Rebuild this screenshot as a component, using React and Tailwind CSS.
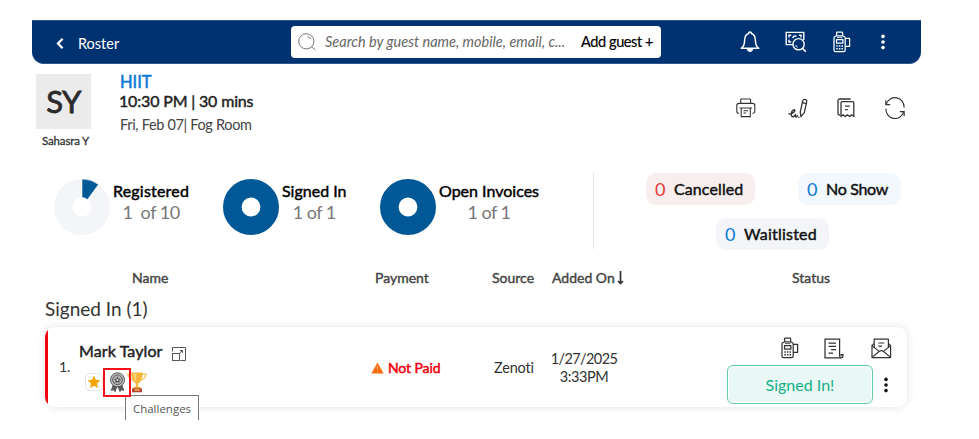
import React from "react";

const Dots = ({ className }) => (
  <svg className={className} width="6" height="18" viewBox="0 0 6 18" fill="currentColor">
    <circle cx="3" cy="3.4" r="1.8" />
    <circle cx="3" cy="9" r="1.8" />
    <circle cx="3" cy="14.6" r="1.8" />
  </svg>
);

const Terminal = ({ className }) => (
  <svg className={className} width="18" height="22" viewBox="0 0 18 22" fill="none" stroke="currentColor" strokeWidth="1.25" strokeLinejoin="round">
    <path d="M3.6 4.8V1.8Q3.6 1 4.4 1H8.8Q9.6 1 9.6 1.8V4.8" />
    <path d="M3.6 4.8L1.7 5.8Q1 6.2 1 7V19Q1 20.6 2.6 20.6H10.6Q12.2 20.6 12.2 19V7Q12.2 6.2 11.5 5.8L9.6 4.8Z" />
    <path d="M12.2 7.4H16.6V15.4H12.2" />
    <rect x="3.5" y="8.6" width="6.4" height="3.4" />
    <path d="M4 6.6H9.4" strokeWidth="0.8" />
    <path d="M3.3 14.9H10M3.3 17.7H10" strokeWidth="1.5" strokeDasharray="1.5 1.1" />
  </svg>
);

const Bell = () => (
  <svg width="20" height="22" viewBox="0 0 20 22" fill="none" stroke="currentColor" strokeWidth="1.5" strokeLinejoin="round">
    <path d="M8.6 2.6Q8.6 1 10 1Q11.4 1 11.4 2.6Q15.2 3.6 15.4 9.4Q15.5 15.2 18.8 17.3H1.2Q4.5 15.2 4.6 9.4Q4.8 3.6 8.6 2.6Z" />
    <path d="M7 18H13Q12.4 20.8 10 20.8Q7.6 20.8 7 18Z" fill="currentColor" strokeWidth="0.6" />
  </svg>
);

const CashSearch = () => (
  <svg width="22" height="22" viewBox="0 0 22 22" fill="none" stroke="currentColor" strokeWidth="1.4">
    <path d="M8 13.6H1.2V1.4H18.8V9" />
    <path d="M4 6.4V4.2H6.2M13.8 4.2H16V6.4M4 8.8V11H6.2" />
    <path d="M7.6 7Q8.6 4.6 11.4 5.2" />
    <circle cx="13.6" cy="13.2" r="5.6" />
    <path d="M10.8 14Q11 15.6 12.6 16.2" strokeWidth="1" />
    <path d="M17.4 17.2L20.8 20.8" strokeWidth="1.6" />
  </svg>
);

const Printer = () => (
  <svg width="20" height="20" viewBox="0 0 20 20" fill="none" stroke="currentColor" strokeWidth="1.1">
    <path d="M4.7 5.2V1.6Q4.7 1 5.3 1H14Q14.6 1 14.6 1.6V5.2" />
    <path d="M3.2 15.2H2.4Q.8 15.2 .8 13.6V7.5Q.8 5.4 2.9 5.4H16.6Q18.8 5.4 18.8 7.5V13.6Q18.8 15.2 17.2 15.2H16.4" />
    <path d="M3.6 10H16M5.2 10V18.6H14.3V10" />
    <path d="M7.5 12.7H12M7.5 15H10.2" />
  </svg>
);

const Sign = () => (
  <svg width="21" height="21" viewBox="0 0 21 21" fill="none" stroke="currentColor" strokeWidth="1.4" strokeLinecap="round" strokeLinejoin="round">
    <path d="M1 16C4.4 15.8 7.2 13.8 6.8 12.2C6.3 10.9 3.6 12.4 3.3 15.4C3.1 17.8 4 19 5.3 18.7C6.5 18.4 7 17.4 7.6 16.5C7.4 18.2 7.6 19.2 8.4 19C9 18.8 9.2 18.2 9.5 17.7" />
    <path d="M12.3 13.8L14.7 3Q15.3 1 17 1.4Q19 1.9 18.7 3.9L16.3 14.6L12.9 18.6Z" strokeWidth="1.3" />
    <path d="M14.4 4.6L18.3 5.6M10.4 19.2H11.2" strokeWidth="1.1" />
  </svg>
);

const Receipts = () => (
  <svg width="18" height="20" viewBox="0 0 18 20" fill="none" stroke="currentColor" strokeWidth="1.3" strokeLinejoin="round">
    <path d="M3.2 17H2.6Q1 17 1 15.4V2.6Q1 1 2.6 1H13.6" />
    <path d="M4 18.5V4.8Q4 3.6 5.2 3.6H15.6Q16.8 3.6 16.8 4.8V18.5L14.7 16.8L12.6 18.5L10.4 16.8L8.2 18.5L6.1 16.8Z" />
    <path d="M8 8.2H12.8M8 11.6H10.8" />
  </svg>
);

const Refresh = () => (
  <svg width="22" height="22" viewBox="0 0 22 22" fill="none" stroke="currentColor" strokeWidth="1.15">
    <path d="M2.4 7.2A9 9 0 0 1 20 10.6" />
    <path d="M2 11.6A9 9 0 0 0 19.6 15" />
    <path d="M1.8 3.2V7.6H6.2" />
    <path d="M20.2 19V14.6H15.8" />
  </svg>
);

const Bill = () => (
  <svg width="20" height="21" viewBox="0 0 20 21" fill="none" stroke="currentColor" strokeWidth="1.25">
    <path d="M15.6 16.4V1H1V19.8H16.8Q18.9 19.8 18.9 17.9V16.6H17.2V18" />
    <path d="M15.6 16V17.6Q15.6 19.6 17 19.8" />
    <path d="M4.6 5H12M4.6 8.3H12M7 11.6H12M4.6 15H9" />
  </svg>
);

const Mail = () => (
  <svg width="21" height="21" viewBox="0 0 21 21" fill="none" stroke="currentColor" strokeWidth="1.2" strokeLinejoin="round">
    <path d="M3.2 10V1.2H17.4V10" />
    <path d="M3 5.6L1 7.4V19.6H19.6V7.4L17.6 5.6" />
    <path d="M1 7.6L8.4 13.6M19.6 7.6L12.2 13.6M1 19.4L8.4 13.3Q10.3 11.9 12.2 13.3L19.6 19.4" />
    <path d="M7.4 5H13.2M7.4 8.2H11" />
  </svg>
);

const Expand = () => (
  <svg width="16" height="15" viewBox="0 0 16 15" fill="none" stroke="#555" strokeWidth="1">
    <path d="M1.5 5.5V1.5H14.5V14.5H9.5" />
    <rect x="1.5" y="7.5" width="7" height="7" />
    <path d="M8.4 7.4L11.6 4.4M9 4.5H11.5V7" />
  </svg>
);

const Medal = () => (
  <svg width="17" height="21" viewBox="0 0 17 21">
    <path d="M4 12L1.6 19L4.6 18.2L6.2 20.5L8.5 14.5L10.8 20.5L12.4 18.2L15.4 19L13 12Z" fill="#5b5b5b" />
    <circle cx="8.5" cy="7.8" r="7" fill="#c4c4c4" stroke="#555" strokeWidth="1" />
    <circle cx="8.5" cy="7.8" r="4.9" fill="#b0b0b0" stroke="#555" strokeWidth="0.9" />
    <path d="M8.5 4.4L9.5 6.7L12 6.9L10.1 8.5L10.7 11L8.5 9.7L6.3 11L6.9 8.5L5 6.9L7.5 6.7Z" fill="#444" />
    <circle cx="8.5" cy="7.9" r="1.1" fill="#ddd" />
  </svg>
);

const Trophy = () => (
  <svg width="20" height="21" viewBox="0 0 20 21">
    <path d="M5 2.2H1Q1.4 6.6 6.4 8.2M15 2.2H19Q18.6 6.6 13.6 8.2" fill="none" stroke="#f4c968" strokeWidth="1.5" />
    <path d="M4.2 .6H15.8Q15.4 9.5 11.2 11.6V16H8.8V11.6Q4.6 9.5 4.2 .6Z" fill="#f6b73c" />
    <path d="M6.4 1.4H9.2V9.8Q7 8 6.4 1.4Z" fill="#fbd67d" />
    <path d="M6.6 15H13.4L14.2 17H5.8Z" fill="#e79a35" />
    <rect x="5" y="16.4" width="10" height="3.8" rx=".5" fill="#b5452c" />
    <rect x="7.6" y="17.2" width="4.8" height="1.6" fill="#eda765" />
  </svg>
);

const Donut = ({ partial }) => (
  <svg className="shrink-0" width="56" height="56" viewBox="0 0 56 56">
    <circle cx="28" cy="28" r="18.7" fill="none" stroke={partial ? "#f3f5f8" : "#005896"} strokeWidth="18.6" />
    {partial && <path d="M28 0A28 28 0 0 1 44.5 5.4L33.5 20.6A9.4 9.4 0 0 0 28 18.6Z" fill="#005896" stroke="#fff" strokeWidth="0.6" />}
  </svg>
);

const Stat = ({ label, value, partial, className, labelClass }) => (
  <div className={`flex shrink-0 ${className}`}>
    <Donut partial={partial} />
    <div className="ml-[3px] flex flex-col items-center whitespace-nowrap pt-px">
      <span className={`text-[16px] leading-[22px] text-black [-webkit-text-stroke:0.45px_#000] ${labelClass}`}>{label}</span>
      <span className="whitespace-pre text-[18px] leading-[21px] tracking-[-0.5px] text-[#777]">{value}</span>
    </div>
  </div>
);

const Badge = ({ label, className, numClass, labelClass }) => (
  <div className={`flex h-8 items-center whitespace-nowrap rounded-[10px] pl-[9px] ${className}`}>
    <span className={`w-[19px] text-[18px] leading-8 ${numClass}`}>0</span>
    <span className={`text-[16px] leading-8 text-[#111] [-webkit-text-stroke:0.45px_#111] ${labelClass}`}>{label}</span>
  </div>
);

export default function App() {
  return (
    <div className="h-[439px] w-[979px] overflow-hidden bg-white pt-5 font-['Lato',sans-serif] text-[#333]">
      <header className="ml-8 flex h-[44px] w-[889px] items-center rounded-b-xl border-y border-[#2f578c] bg-[#003170] text-white">
        <svg className="ml-[24px] mt-[2px]" width="8" height="11" viewBox="0 0 8 11" fill="none" stroke="currentColor" strokeWidth="2.3">
          <path d="M6.6 .8L2 5.5L6.6 10.2" />
        </svg>
        <span className="ml-[14px] mt-[3px] w-[213px] text-[14.5px]">Roster</span>
        <div className="flex h-8 w-[370px] items-center whitespace-nowrap rounded-[4px] bg-white pl-[7px]">
          <svg width="18" height="18" viewBox="0 0 18 18" fill="none" stroke="#777" strokeWidth="1">
            <circle cx="8.3" cy="8.3" r="7.6" />
            <path d="M13.6 13.8L17.4 17.2M9.5 3.5Q12 4 12.9 6.2" />
          </svg>
          <span className="ml-[9px] w-[256px] text-[14.5px] italic text-[#666]">Search by guest name, mobile, email, c...</span>
          <span className="text-[14.5px] tracking-[-0.4px] text-black [-webkit-text-stroke:0.2px_#000]">Add guest +</span>
        </div>
        <div className="ml-[79px] flex items-center">
          <Bell />
          <div className="ml-[25px]"><CashSearch /></div>
          <Terminal className="ml-[26px]" />
          <Dots className="ml-[29px]" />
        </div>
      </header>

      <section className="flex h-[96px] pl-9 pt-[10px]">
        <div className="flex w-[55px] flex-col">
          <div className="flex h-[55px] items-center justify-center bg-[#ebebeb] text-[31px] tracking-[-0.5px] text-[#2b2b2b] [-webkit-text-stroke:0.8px_#2b2b2b]">SY</div>
          <span className="mt-1 whitespace-nowrap pl-[6px] text-[11.5px] leading-4 tracking-[-0.15px] [-webkit-text-stroke:0.3px_#333]">Sahasra Y</span>
        </div>
        <div className="ml-[28px] w-[617px] whitespace-nowrap">
          <div className="mt-[-2px] pl-px text-[16.5px] leading-5 text-[#0a78d6] [-webkit-text-stroke:0.5px_#0a78d6]">HIIT</div>
          <div className="mt-[-1px] text-[16px] leading-5 tracking-[-0.17px] text-[#222] [-webkit-text-stroke:0.45px_#222]">10:30 PM | 30 mins</div>
          <div className="mt-1 pl-px text-[14.5px] leading-5 tracking-[-0.33px] text-[#444]">Fri, Feb 07| Fog Room</div>
        </div>
        <div className="mt-[23px] flex h-[22px] items-center text-[#333]">
          <div><Printer /></div>
          <div className="ml-[32px]"><Sign /></div>
          <div className="ml-[28px]"><Receipts /></div>
          <div className="ml-[29px]"><Refresh /></div>
        </div>
      </section>

      <section className="flex h-[98px] pl-[54px] pt-[13px]">
        <Stat className="mt-[6px] w-[169px]" labelClass="tracking-[0.2px]" label="Registered" value="1  of 10" partial />
        <Stat className="mt-[6px] w-[157px]" label="Signed In" value="1 of 1" />
        <Stat className="mt-[6px] w-[213px]" label="Open Invoices" value="1 of 1" />
        <div className="h-[76px] w-px bg-[#e4e4e4]" />
        <div className="ml-[52px] w-[255px]">
          <div className="flex justify-between">
            <Badge label="Cancelled" className="w-[109px] bg-[#f8eeed]" numClass="text-[#e53935]" labelClass="tracking-[0.1px]" />
            <Badge label="No Show" className="w-[103px] bg-[#f3f8fc]" numClass="text-[#0a78d6]" labelClass="tracking-[-0.3px]" />
          </div>
          <Badge label="Waitlisted" className="ml-[70px] mt-[13px] w-[113px] bg-[#f3f5f8]" numClass="text-[#0a78d6]" labelClass="tracking-[0.2px]" />
        </div>
      </section>

      <div className="flex h-[39px] items-center pl-[132px] text-[14px] text-[#444] [-webkit-text-stroke:0.4px_#444]">
        <span className="w-[243px]">Name</span>
        <span className="w-[117px]">Payment</span>
        <span className="w-[60px]">Source</span>
        <span className="w-[65px] whitespace-nowrap">Added On</span>
        <svg width="7" height="14" viewBox="0 0 7 14" fill="none" stroke="#333" strokeWidth="1.7">
          <path d="M3.5 0V12.6M1 10L3.5 12.6L6 10" />
        </svg>
        <span className="ml-[168px]">Status</span>
      </div>
      <h2 className="h-[30px] pl-[45px] pt-px text-[19px] leading-[22px]">Signed In (1)</h2>

      <div className="relative ml-[45px] flex h-20 w-[862px] rounded-[10px] bg-[linear-gradient(to_right,#f5000f_3px,#fff_3px)] shadow-[0_0_8px_rgba(0,0,0,0.12)]">
        <span className="ml-[14px] mt-[30px] w-[20px] text-[14px] leading-5">1.</span>
        <div className="w-[292px]">
          <div className="mt-[13px] flex h-[22px] items-center whitespace-nowrap">
            <span className="w-[92px] text-[16px] leading-5 tracking-[0.1px] text-[#222] [-webkit-text-stroke:0.45px_#222]">Mark Taylor</span>
            <div className="mt-[4px]"><Expand /></div>
          </div>
          <div className="mt-[6px] flex h-7 items-center pl-[6px]">
            <div className="flex h-[18px] w-[18px] items-center justify-center rounded-[4px] border border-[#e6e6e6] bg-white">
              <svg width="14" height="14" viewBox="0 0 14 14" fill="#f0a500">
                <path d="M7 .6L8.9 4.8L13.4 5.3L10 8.4L11 13L7 10.7L3 13L4 8.4L.6 5.3L5.1 4.8Z" />
              </svg>
            </div>
            <div className="z-10 flex h-[29px] w-[28px] items-center justify-center border-2 border-[#f5101a]"><Medal /></div>
            <div className="ml-[-4px]"><Trophy /></div>
          </div>
        </div>
        <div className="mt-[31px] flex h-5 w-[123px] items-center whitespace-nowrap">
          <svg width="13" height="12" viewBox="0 0 13 12">
            <path d="M6.5 .5L12.6 11.6H.4Z" fill="#f96a0b" />
            <path d="M6.5 4V8M6.5 9.2V10.4" stroke="#fdb27a" strokeWidth="1" />
          </svg>
          <span className="ml-[4px] mt-[-2px] text-[14px] tracking-[-0.1px] text-[#f5000f] [-webkit-text-stroke:0.5px_#f5000f]">Not Paid</span>
        </div>
        <span className="mt-[31px] w-[56px] text-[14.5px] leading-5 tracking-[-0.2px]">Zenoti</span>
        <div className="mt-[23px] w-[68px] text-center text-[14.5px] leading-[17.5px]">
          <div className="ml-[-4px] w-[76px] tracking-[-0.6px]">1/27/2025</div>
          <div className="tracking-[-0.4px]">3:33PM</div>
        </div>
        <div className="ml-[109px] mt-[10px] w-[170px]">
          <div className="flex h-[22px] items-center pl-[54px]">
            <Terminal />
            <div className="ml-[25px]"><Bill /></div>
            <div className="ml-[27px]"><Mail /></div>
          </div>
          <div className="mt-[6px] flex items-center">
            <button className="h-[39px] w-[146px] rounded-[6px] border border-[#62cbb0] bg-[#e9f8f5] text-[16px] text-[#14b088] shadow-[inset_0_0_0_1px_#fff]">Signed In!</button>
            <Dots className="ml-[10px] text-[#111]" />
          </div>
        </div>
        <div className="absolute left-[80px] top-[68px] h-[25px] w-[74px] border border-b-0 border-[#777] bg-white text-center font-['Open_Sans',sans-serif] text-[11.5px] leading-[25px] text-[#555]">Challenges</div>
      </div>
    </div>
  );
}
